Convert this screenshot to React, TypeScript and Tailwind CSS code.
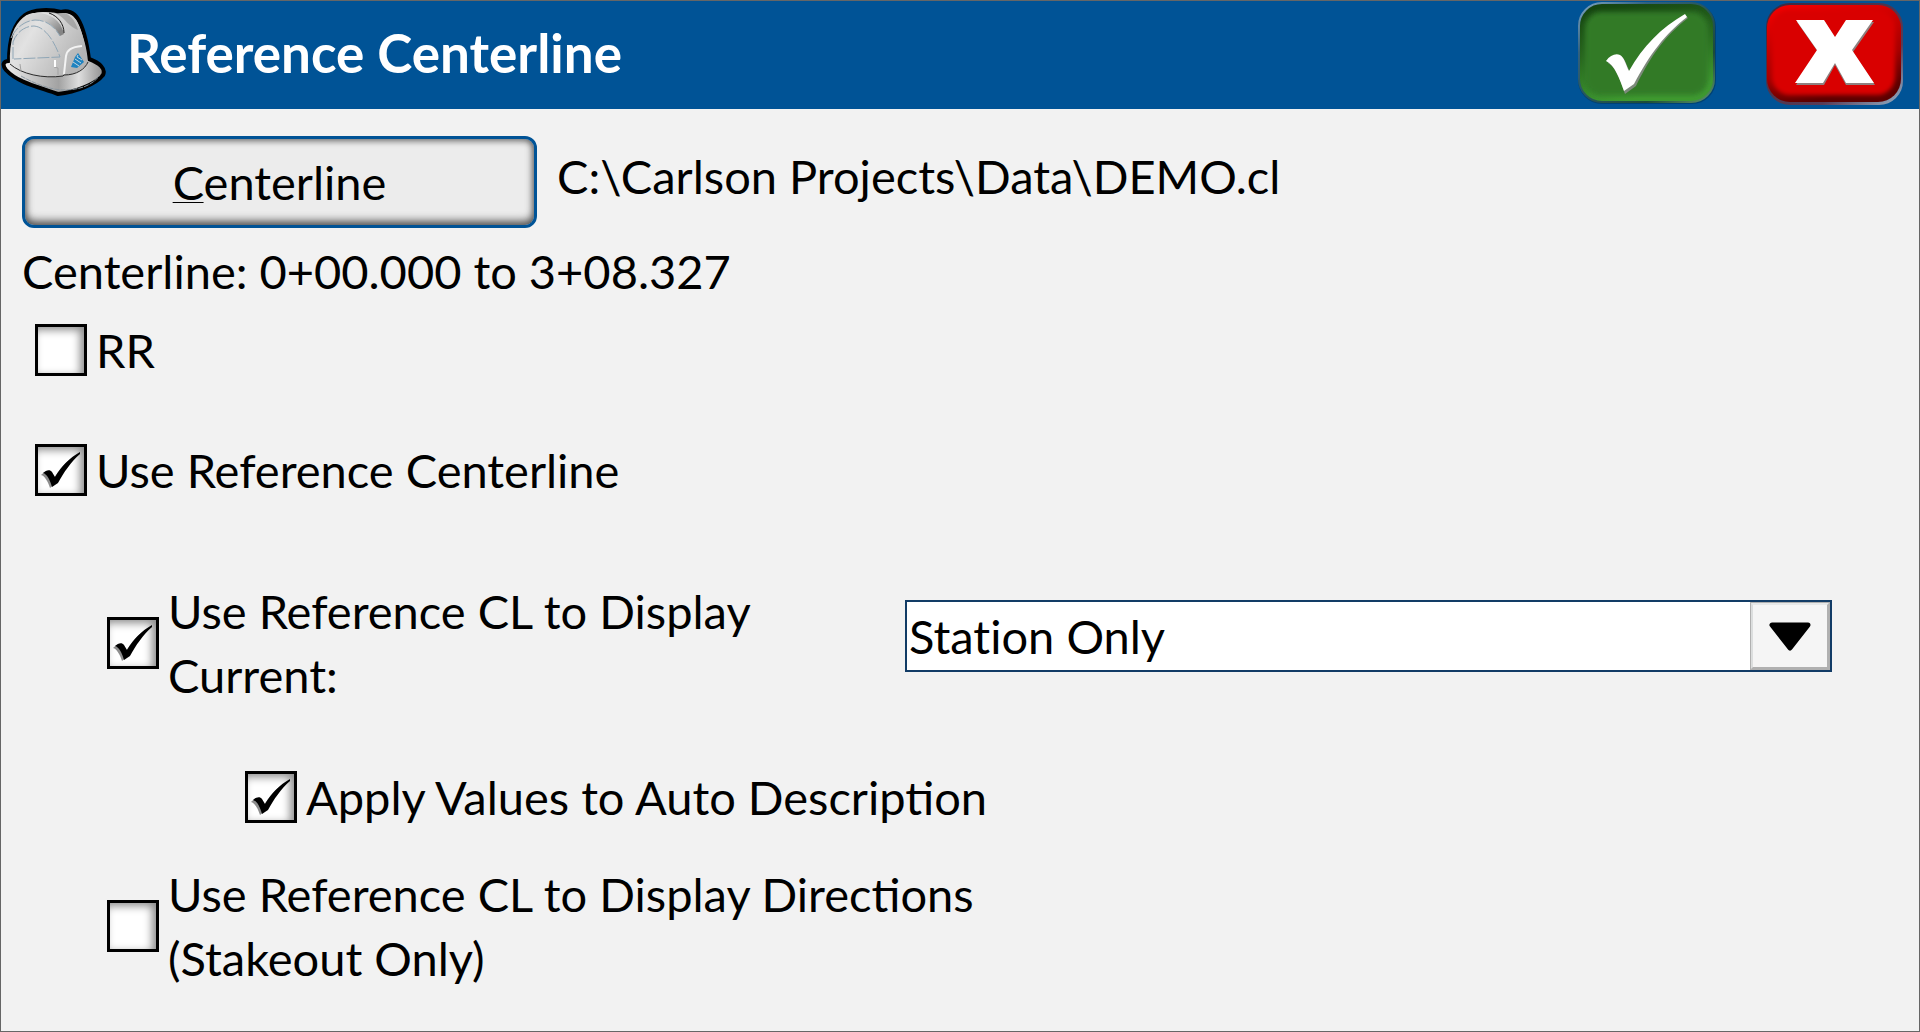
import { useState } from 'react';
import type { ReactNode } from 'react';

function HardHat() {
  return (
    <svg viewBox="0 1 106 98" className="h-[98px] w-[106px] shrink-0" aria-hidden="true">
      <defs>
        <linearGradient id="shell" x1="0" y1="0" x2="1" y2="0.5">
          <stop offset="0" stopColor="#c9c9c9" />
          <stop offset="0.35" stopColor="#e2e2e2" />
          <stop offset="1" stopColor="#b4b4b4" />
        </linearGradient>
        <linearGradient id="brim" x1="0" y1="0" x2="1" y2="0">
          <stop offset="0" stopColor="#efefef" />
          <stop offset="0.55" stopColor="#a2a2a2" />
          <stop offset="0.75" stopColor="#dedede" />
          <stop offset="1" stopColor="#8f8f8f" />
        </linearGradient>
        <linearGradient id="ridge" x1="0" y1="0" x2="1" y2="0.6">
          <stop offset="0" stopColor="#e6e6e6" />
          <stop offset="0.6" stopColor="#c8c8c8" />
          <stop offset="1" stopColor="#858585" />
        </linearGradient>
      </defs>
      <path
        d="M8 61 C2 61 1 65 5 70 C17 83 38 87 57 94 C75 92 95 84 102 75 C105 69 99 63 88 59 C86 44 82 27 77 19 C73 12 66 10 60 12 C50 9 32 9 24 15 C12 24 8 43 8 61 Z"
        fill="url(#brim)"
        stroke="#000"
        strokeWidth="4"
        strokeLinejoin="round"
      />
      <path
        d="M9 64 C8 42 13 25 25 16 C34 11 49 12 56 14 C65 11 73 15 76 22 C82 34 86 48 87 62 C82 71 74 75 61 76 C42 79 19 73 9 64 Z"
        fill="url(#shell)"
      />
      <path d="M9 64 C20 74 42 79 62 76 L63 75 C76 75 84 69 87 62" fill="none" stroke="#2a2a2a" strokeWidth="1" />
      <path d="M56 14 C66 10 74 19 77 30 C68 27 64 18 56 14 Z" fill="#8f8f8f" opacity="0.6" />
      <path d="M10 38 C14 24 22 14 33 13 C47 12 60 19 63 34 L59 36 C53 25 45 20 35 20 C23 21 15 28 10 38 Z" fill="url(#ridge)" />
      <path d="M48 13 C57 16 63 24 63 33" fill="none" stroke="#1c1c1c" strokeWidth="1" />
      <path d="M10 38 C15 28 23 21 34 20 C45 20 53 26 59 36 M12 59 L12 42 C16 31 25 26 33 26 C45 27 54 43 59 57 L13 59" fill="none" stroke="#8fa6b6" strokeWidth="1" strokeDasharray="12 2" />
      <path d="M63 74 L65 56 C66 50 70 47 81 46" fill="none" stroke="#f3f3f3" strokeWidth="2" />
      <path d="M19 64 L20 71 M53 67 L57 68 L57 75" fill="none" stroke="#a3a3a3" strokeWidth="1" />
      <path d="M54 60 V67" stroke="#fff" strokeWidth="2" />
      <path d="M20 76 C34 84 51 90 62 90 C78 90 91 86 99 75" fill="none" stroke="#8b97a0" strokeWidth="1" strokeDasharray="5 1" />
      <path d="M77 53 L83 62 L76 68 L70 67 L74 57 Z" fill="#1f83c0" />
      <path d="M77 55 L76 57 L81 60 M74 59 L80 63 M72 62 L78 66" fill="none" stroke="#c3d5e0" strokeWidth="1" />
    </svg>
  );
}

function AcceptIcon() {
  return (
    <svg viewBox="0 0 140 106" className="h-[106px] w-[140px]" aria-hidden="true">
      <defs>
        <linearGradient id="okEdge" x1="0" y1="0" x2="1" y2="1">
          <stop offset="0" stopColor="#7fa5c2" />
          <stop offset="0.25" stopColor="#31617f" />
          <stop offset="0.75" stopColor="#1d4c38" />
          <stop offset="1" stopColor="#5d9568" />
        </linearGradient>
        <linearGradient id="okFace" x1="0" y1="0" x2="0.3" y2="1">
          <stop offset="0" stopColor="#123f0e" />
          <stop offset="0.5" stopColor="#27651f" />
          <stop offset="1" stopColor="#3f9a31" />
        </linearGradient>
        <filter id="okSoft" x="-10%" y="-10%" width="120%" height="120%">
          <feGaussianBlur stdDeviation="2.5" />
        </filter>
      </defs>
      <rect x="1" y="2" width="138" height="101" rx="24" fill="#003a66" opacity="0.7" />
      <rect x="2" y="2" width="135" height="99" rx="23" fill="url(#okFace)" stroke="url(#okEdge)" strokeWidth="2" />
      <rect x="8" y="11" width="123" height="83" rx="16" fill="#307a26" filter="url(#okSoft)" />
      <path d="M31 62 C35 56 41 53 45 56 C48 58 50 65 53 71 C67 46 85 28 109 15 L111 17 C89 34 74 54 59 85 L48 93 C44 81 39 66 31 62 Z" fill="#7d8a7b" />
      <path d="M29 60 C33 54 39 52 43 54 C47 56 49 64 52 70 C66 45 84 27 108 13 L110 16 C88 33 73 53 57 83 L47 90 C43 79 38 64 29 60 Z" fill="#fff" />
    </svg>
  );
}

function CancelIcon() {
  return (
    <svg viewBox="0 0 140 106" className="h-[106px] w-[140px]" aria-hidden="true">
      <defs>
        <linearGradient id="noEdge" x1="0" y1="0" x2="1" y2="1">
          <stop offset="0" stopColor="#3a2941" />
          <stop offset="0.7" stopColor="#5a3b55" />
          <stop offset="1" stopColor="#94b2c9" />
        </linearGradient>
        <linearGradient id="noFace" x1="0" y1="0" x2="0.3" y2="1">
          <stop offset="0" stopColor="#f60000" />
          <stop offset="0.7" stopColor="#a40000" />
          <stop offset="1" stopColor="#5c0000" />
        </linearGradient>
        <filter id="noSoft" x="-10%" y="-10%" width="120%" height="120%">
          <feGaussianBlur stdDeviation="2" />
        </filter>
      </defs>
      <rect x="1" y="2" width="137" height="102" rx="24" fill="url(#noEdge)" />
      <rect x="2" y="4" width="134" height="97" rx="23" fill="url(#noFace)" />
      <rect x="7" y="9" width="123" height="85" rx="18" fill="#d90000" filter="url(#noSoft)" />
      <path d="M32 21 H60 L70 38 L81 21 H109 L88 51 L110 84 H81 L70 64 L59 84 H31 L53 51 Z" fill="#8e8080" />
      <path d="M31 19 H59 L70 36 L81 19 H108 L87 49 L109 82 H81 L70 62 L58 82 H30 L52 49 Z" fill="#fff" />
    </svg>
  );
}

function CheckRow({ checked = false, children }: { checked?: boolean; children: ReactNode }) {
  const [on, setOn] = useState(checked);
  return (
    <label className="flex w-fit items-center gap-[9px]">
      <span className="relative size-[52px] shrink-0">
        <input
          type="checkbox"
          checked={on}
          onChange={(e) => setOn(e.target.checked)}
          className="block size-[52px] appearance-none border-3 border-black bg-white shadow-[inset_-4px_3px_9px_#8c8c8c]"
        />
        {on && (
          <svg viewBox="0 0 52 52" className="pointer-events-none absolute inset-0 size-[52px]" aria-hidden="true">
            <path d="M6 31 C9 28 12 27 14 29 L18 36 C24 25 32 16 44 10 C33 20 26 29 20 40 L15 44 C13 38 10 32 6 31 Z" fill="#8d8d8d" />
            <path d="M8 29 C11 26 15 25 17 28 L20 33 C26 23 34 14 45 8 L45 10 C36 18 29 28 23 39 L17 43 C15 36 12 30 8 29 Z" fill="#000" />
          </svg>
        )}
      </span>
      <span>{children}</span>
    </label>
  );
}

export default function App() {
  return (
    <div className="min-h-screen border border-[#666666] bg-[#f2f2f2] font-['Lato','Open_Sans',sans-serif] text-[47px] leading-[64px] text-black">
      <header className="flex h-[108px] items-start bg-[#005396] pr-[14px]">
        <HardHat />
        <h1 className="ml-5 flex-1 pt-5 text-[53px] font-bold text-white">Reference Centerline</h1>
        <div className="flex gap-12">
          <button type="button" aria-label="OK">
            <AcceptIcon />
          </button>
          <button type="button" aria-label="Cancel">
            <CancelIcon />
          </button>
        </div>
      </header>

      <main className="pt-[27px] pr-[87px] pl-[21px]">
        <div className="flex items-start gap-5">
          <button
            type="button"
            className="h-[92px] w-[515px] shrink-0 rounded-xl border-3 border-[#005396] bg-[#ececec] shadow-[inset_0_-4px_8px_#555,inset_0_2px_6px_#777]"
          >
            <span className="underline decoration-1 underline-offset-2">C</span>enterline
          </button>
          <p className="pt-2">C:\Carlson Projects\Data\DEMO.cl</p>
        </div>
        <p className="mt-[11px]">Centerline: 0+00.000 to 3+08.327</p>

        <div className="mt-[15px] ml-[13px]">
          <CheckRow>RR</CheckRow>
        </div>
        <div className="mt-14 ml-[13px]">
          <CheckRow checked>Use Reference Centerline</CheckRow>
        </div>

        <div className="mt-[77px] ml-[85px] grid grid-cols-[798fr_927fr] items-start">
          <CheckRow checked>
            Use Reference CL to Display
            <br />
            Current:
          </CheckRow>
          <div className="relative mt-[21px]">
            <select
              aria-label="Display current"
              className="block h-[72px] w-full appearance-none border-2 border-[#123c66] bg-white pl-[2px] text-black [font-variant-ligatures:none]"
            >
              <option>Station Only</option>
            </select>
            <span className="pointer-events-none absolute inset-y-[2px] right-[2px] flex w-[80px] items-center justify-center border-3 border-t-[#e6e8e8] border-r-[#b0b0b0] border-b-[#b0b0b0] border-l-[#dcdede] bg-[#f5f5f5] outline-1 -outline-offset-1 outline-[#b0b0b0]">
              <svg viewBox="0 0 42 30" className="h-[30px] w-[42px]" aria-hidden="true">
                <path d="M3 4 H39 L21 27 Z" fill="#000" stroke="#000" strokeWidth="5" strokeLinejoin="round" />
              </svg>
            </span>
          </div>
        </div>

        <div className="mt-[58px] ml-[223px]">
          <CheckRow checked>Apply Values to Auto Description</CheckRow>
        </div>
        <div className="mt-[33px] ml-[85px]">
          <CheckRow>
            Use Reference CL to Display Directions
            <br />
            (Stakeout Only)
          </CheckRow>
        </div>
      </main>
    </div>
  );
}
